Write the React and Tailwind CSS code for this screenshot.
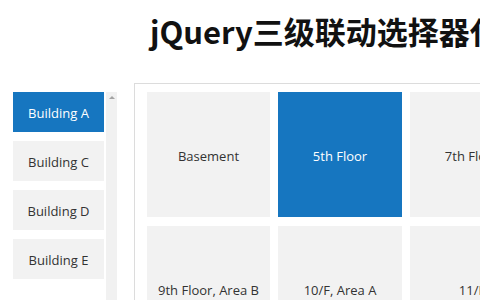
import { useState } from 'react'

const BUILDINGS = ['Building A', 'Building C', 'Building D', 'Building E']
const FLOORS = ['Basement', '5th Floor', '7th Floor', '9th Floor, Area B', '10/F, Area A', '11/F']

export default function App() {
  const [building, setBuilding] = useState('Building A')
  const [floor, setFloor] = useState('5th Floor')

  return (
    <div
      className="w-[480px] h-[300px] overflow-hidden bg-white"
      style={{ fontFamily: '"Open Sans", "Noto Sans", sans-serif' }}
    >
      {/* Title */}
      <div className="h-[83px] pl-[150px] pt-[9px] whitespace-nowrap">
        <h1
          className="text-[31px] leading-[44px] font-bold text-[#111]"
          style={{ fontFamily: '"Noto Sans CJK SC", "Noto Sans", sans-serif' }}
        >
          jQuery三级联动选择器代码
        </h1>
      </div>

      <div className="flex">
        {/* Buildings list */}
        <div className="flex pl-[13px] pt-[9px]">
          <div className="flex flex-col gap-[9px] w-[91px]">
            {BUILDINGS.map(b => (
              <button
                key={b}
                onClick={() => setBuilding(b)}
                className={`h-[40px] pt-[3px] text-[13px] ${building === b ? 'bg-[#1676c0] text-white' : 'bg-[#f2f2f2] text-[#333]'}`}
              >
                {b}
              </button>
            ))}
          </div>
          {/* scrollbar */}
          <div className="ml-[2px] w-[11px] h-[220px] bg-[#f1f1f1] flex justify-center pt-[4px]">
            <div className="w-0 h-0 border-x-[3px] border-x-transparent border-b-[3px] border-b-[#a3a3a3]" />
          </div>
        </div>

        {/* Floors panel */}
        <div className="ml-[17px] flex-1 border-l border-t border-[#dcdcdc] pl-[12px] pt-[8px] h-[300px]">
          <div className="grid grid-cols-[123px_124px_124px] gap-x-[8px] gap-y-[9px]">
            {FLOORS.map(f => (
              <button
                key={f}
                onClick={() => setFloor(f)}
                className={`h-[125px] pt-[5px] text-[13px] whitespace-nowrap overflow-hidden ${floor === f ? 'bg-[#1676c0] text-white' : 'bg-[#f2f2f2] text-[#333]'}`}
              >
                {f}
              </button>
            ))}
          </div>
        </div>
      </div>
    </div>
  )
}
